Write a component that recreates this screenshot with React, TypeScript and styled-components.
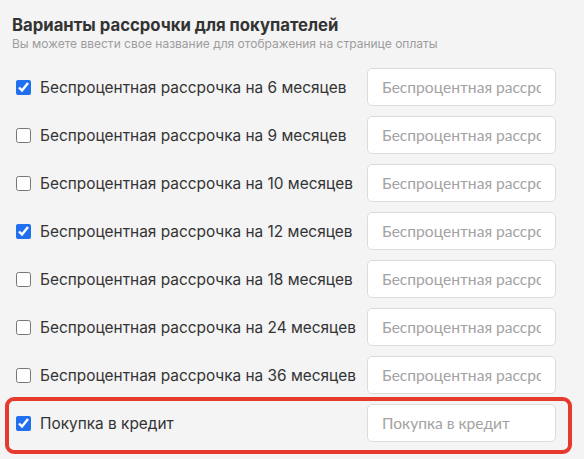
import React from 'react';
import styled, { createGlobalStyle } from 'styled-components';

const GlobalStyle = createGlobalStyle`
    body {
        margin: 0;
        background: #f4f4f4;
        font-family: Inter, 'Noto Sans', sans-serif;
        color: #333;
    }
`;

const Page = styled.section`
    padding: 14px 0 0 12px;
    width: 544px;
`;

const Title = styled.h2`
    margin: 0;
    font-size: 16.7px;
    line-height: 22px;
    font-weight: 700;
    color: #333;
`;

const Subtitle = styled.p`
    margin: 0;
    font-size: 12px;
    line-height: 16px;
    color: #9d9d9d;
`;

const List = styled.div`
    display: flex;
    flex-direction: column;
    gap: 10px;
    margin-top: 16px;
`;

const Highlight = styled.div`
    margin: 3px -16px 0 -7px;
    padding: 3px 12px 8px 3px;
    border: 4px solid #e63a2e;
    border-radius: 9px;
`;

const Row = styled.label`
    display: flex;
    align-items: center;
    height: 38px;
    padding-left: 4px;
    cursor: pointer;
`;

const Check = styled.input`
    margin: 0 9px 0 0;
    width: 15px;
    height: 15px;
    accent-color: #1f6fee;
    flex-shrink: 0;
`;

const Label = styled.span`
    flex: 1;
    min-width: 0;
    font-size: 15.4px;
    color: #333;
    white-space: nowrap;
`;

const NameInput = styled.input`
    box-sizing: border-box;
    flex-shrink: 0;
    width: 189px;
    height: 38px;
    padding: 0 14px;
    border: 1px solid #dcdcdc;
    border-radius: 5px;
    background: #fff;
    font-family: Lato, 'Open Sans', sans-serif;
    font-size: 15.6px;
    color: #333;
    outline: none;

    &::placeholder {
        color: #a3a3a3;
    }
`;

interface IOption {
    id: string;
    label: string;
    checked: boolean;
}

const options: IOption[] = [
    { id: 'm6', label: 'Беспроцентная рассрочка на 6 месяцев', checked: true },
    { id: 'm9', label: 'Беспроцентная рассрочка на 9 месяцев', checked: false },
    { id: 'm10', label: 'Беспроцентная рассрочка на 10 месяцев', checked: false },
    { id: 'm12', label: 'Беспроцентная рассрочка на 12 месяцев', checked: true },
    { id: 'm18', label: 'Беспроцентная рассрочка на 18 месяцев', checked: false },
    { id: 'm24', label: 'Беспроцентная рассрочка на 24 месяцев', checked: false },
    { id: 'm36', label: 'Беспроцентная рассрочка на 36 месяцев', checked: false },
];

const credit: IOption = { id: 'credit', label: 'Покупка в кредит', checked: true };

const OptionRow = ({ option }: { option: IOption }) => (
    <Row>
        <Check type="checkbox" defaultChecked={option.checked} />
        <Label>{option.label}</Label>
        <NameInput type="text" placeholder={option.label} />
    </Row>
);

const App = () => (
    <>
        <GlobalStyle />
        <Page>
            <Title>Варианты рассрочки для покупателей</Title>
            <Subtitle>
                Вы можете ввести свое название для отображения на странице оплаты
            </Subtitle>
            <List>
                {options.map(option => (
                    <OptionRow key={option.id} option={option} />
                ))}
            </List>
            <Highlight>
                <OptionRow option={credit} />
            </Highlight>
        </Page>
    </>
);

export default App;
